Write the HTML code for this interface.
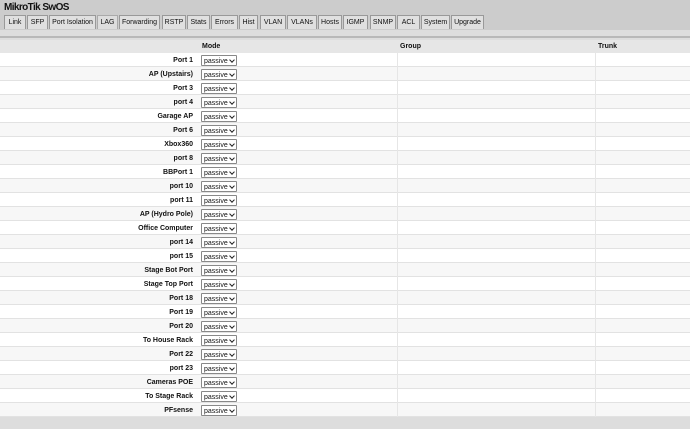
<!DOCTYPE html><html><head><style>
*{margin:0;padding:0;box-sizing:border-box}
body{width:690px;height:429px;background:#ddd;font-family:"Liberation Sans",sans-serif;font-size:8px;font-weight:bold;color:#111;overflow:hidden;position:relative}
.hdr{position:absolute;left:0;top:0;width:690px;height:30px;background:#ccc}
.title{position:absolute;left:4px;top:2px;font-size:10px;letter-spacing:-0.6px}
.tab{position:absolute;top:15px;height:14px;border:1px solid #999;border-bottom:none;background:#e0e0e0;font-size:7px;font-weight:normal;text-align:center;line-height:13px;color:#111}
.tab.act{background:#ddd;border-color:#aaa}
.strip{position:absolute;top:30px;left:0;width:690px;height:8px;background:#ddd;border-bottom:2px solid #b8b8b8}
.th{position:absolute;top:40px;left:0;width:690px;height:13px;background:#e6e6e6;font-size:7px;line-height:13px}
.row{position:absolute;left:0;width:690px;height:14px;border-bottom:1px solid #e2e2e2;font-size:7px;line-height:8px}
.row .l{position:absolute;right:497px;top:4px;text-align:right}
.sel{position:absolute;left:201px;top:2px;width:36px;height:11px;border:1px solid #888;background:#fff;font-weight:normal;line-height:8px;padding:2px 0 0 2px;font-size:7px;border-radius:1px;overflow:hidden}
.sel:after{content:"";position:absolute;right:2px;top:2px;width:3px;height:3px;border-right:1.2px solid #222;border-bottom:1.2px solid #222;transform:rotate(45deg)}
.v1{position:absolute;left:397px;top:0;height:14px;border-left:1px solid #e6e6e6}
.v2{position:absolute;left:595px;top:0;height:14px;border-left:1px solid #e6e6e6}
</style></head><body>
<div class="hdr"><div class="title">MikroTik SwOS</div>
<div class="tab" style="left:4px;width:22px">Link</div>
<div class="tab" style="left:27px;width:21px">SFP</div>
<div class="tab" style="left:49px;width:47px">Port Isolation</div>
<div class="tab act" style="left:97px;width:21px">LAG</div>
<div class="tab" style="left:119px;width:41px">Forwarding</div>
<div class="tab" style="left:162px;width:24px">RSTP</div>
<div class="tab" style="left:187px;width:23px">Stats</div>
<div class="tab" style="left:211px;width:27px">Errors</div>
<div class="tab" style="left:239px;width:19px">Hist</div>
<div class="tab" style="left:260px;width:26px">VLAN</div>
<div class="tab" style="left:287px;width:30px">VLANs</div>
<div class="tab" style="left:318px;width:24px">Hosts</div>
<div class="tab" style="left:343px;width:25px">IGMP</div>
<div class="tab" style="left:370px;width:26px">SNMP</div>
<div class="tab" style="left:397px;width:23px">ACL</div>
<div class="tab" style="left:421px;width:29px">System</div>
<div class="tab" style="left:451px;width:33px">Upgrade</div>
</div>
<div class="strip"></div>
<div class="th"><span style="position:absolute;left:202px">Mode</span><span style="position:absolute;left:400px">Group</span><span style="position:absolute;left:598px">Trunk</span></div>
<div id="rows"></div>
<script>
var n=["Port 1","AP (Upstairs)","Port 3","port 4","Garage AP","Port 6","Xbox360","port 8","BBPort 1","port 10","port 11","AP (Hydro Pole)","Office Computer","port 14","port 15","Stage Bot Port","Stage Top Port","Port 18","Port 19","Port 20","To House Rack","Port 22","port 23","Cameras POE","To Stage Rack","PFsense"];
var h="";n.forEach(function(s,i){h+='<div class="row" style="top:'+(53+i*14)+'px;background:'+(i%2?'#f7f7f7':'#fff')+'"><span class="l">'+s+'</span><div class="sel">passive</div><div class="v1"></div><div class="v2"></div></div>'});
document.getElementById("rows").innerHTML=h;
</script>
</body></html>
